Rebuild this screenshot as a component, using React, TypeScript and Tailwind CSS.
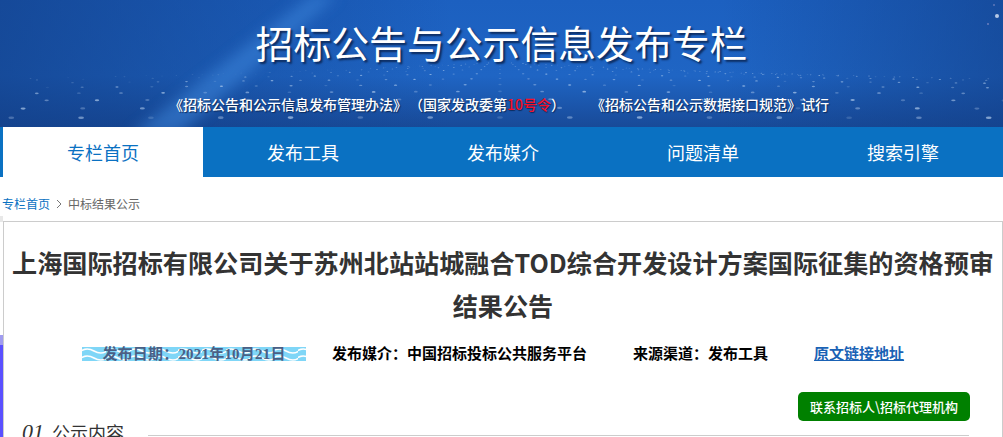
const cjk = "font-['Noto_Sans_CJK_SC','Liberation_Sans',sans-serif]";

const navItems = ['专栏首页', '发布工具', '发布媒介', '问题清单', '搜索引擎'];

// grid of dots fanning out from the horizon behind the title
function makeDots() {
  const dots: { x: number; y: number; r: number; o: number }[] = [];
  for (let i = -26; i <= 26; i++) {
    for (let j = 0; j < 12; j++) {
      const t = (j + 1) / 12;
      const depth = t * t;
      const x = 500 + i * (11 + depth * 70);
      const y = 62 + depth * 66 + Math.abs(i) * 0.55 * (1 - t);
      if (x < -5 || x > 1008 || y > 127) continue;
      dots.push({ x, y, r: 0.45 + depth * 1.5, o: 0.18 + ((i * 7 + j * 5 + 60) % 5) * 0.1 });
    }
  }
  return dots;
}

function BannerArt() {
  return (
    <svg className="absolute inset-0 w-full h-full" viewBox="0 0 1003 127" preserveAspectRatio="none" aria-hidden>
      <defs>
        <linearGradient id="sky" x1="0" y1="0" x2="0" y2="1">
          <stop offset="0" stopColor="#1c60c0" />
          <stop offset="0.6" stopColor="#1f65c4" />
          <stop offset="1" stopColor="#184a98" />
        </linearGradient>
        <linearGradient id="fadeL" x1="0" y1="0" x2="1" y2="0">
          <stop offset="0" stopColor="#123f88" stopOpacity="0.7" />
          <stop offset="0.3" stopColor="#123f88" stopOpacity="0.25" />
          <stop offset="0.45" stopColor="#123f88" stopOpacity="0" />
        </linearGradient>
        <linearGradient id="fadeR" x1="0" y1="0" x2="1" y2="0">
          <stop offset="0.72" stopColor="#123f88" stopOpacity="0" />
          <stop offset="1" stopColor="#123f88" stopOpacity="0.6" />
        </linearGradient>
        <filter id="soft"><feGaussianBlur stdDeviation="7" /></filter>
      </defs>
      <rect width="1003" height="127" fill="url(#sky)" />
      <rect width="1003" height="127" fill="url(#fadeL)" />
      <rect width="1003" height="127" fill="url(#fadeR)" />
      <path d="M312 -5 L338 -5 L178 135 L130 135 Z" fill="#3d86dc" opacity="0.55" filter="url(#soft)" />
      {makeDots().map((d, i) => (
        <ellipse key={i} cx={d.x} cy={d.y} rx={d.r * 1.7} ry={d.r * 0.75} fill="#cfe3fa" opacity={d.o} />
      ))}
      <circle cx="997" cy="16" r="2" fill="#dfe9f8" opacity="0.8" />
      <circle cx="988" cy="24" r="0.8" fill="#e6c8ea" opacity="0.7" />
      <circle cx="994" cy="5" r="0.8" fill="#e6c8ea" opacity="0.6" />
    </svg>
  );
}

function WaveFill() {
  return (
    <svg className="absolute inset-0 w-full h-full" aria-hidden>
      <defs>
        <pattern id="wave" width="24" height="14" patternUnits="userSpaceOnUse">
          <rect width="24" height="14" fill="#7fd6f7" />
          <path d="M-1 4 Q5 0 12 4 T25 4" fill="none" stroke="#fff" strokeWidth="1.7" />
          <path d="M-1 11 Q5 7 12 11 T25 11" fill="none" stroke="#fff" strokeWidth="1.7" />
        </pattern>
      </defs>
      <rect width="100%" height="100%" fill="url(#wave)" />
    </svg>
  );
}

export default function App() {
  return (
    <div className={`relative h-[437px] w-full overflow-hidden bg-white ${cjk}`}>
      <header className="relative h-[127px] overflow-hidden">
        <BannerArt />
        <div className="relative flex flex-col items-center">
          <h1 className="mt-[18px] text-[37.85px] leading-[48px] font-normal text-white [text-shadow:2px_2px_2px_#0c2a5c]">
            招标公告与公示信息发布专栏
          </h1>
          <p className="mt-[28px] flex pr-[5px] text-[14px] leading-[20px] font-medium text-white [text-shadow:1px_1px_1px_#0c2a5c]">
            <span>
              《招标公告和公示信息发布管理办法》
              <span className="ml-[9px]">（国家发改委第</span>
              <span className="text-[#f5102a]">10号令</span>）
            </span>
            <span className="ml-[26px]">《招标公告和公示数据接口规范》试行</span>
          </p>
        </div>
      </header>

      <nav className="flex h-[50px] bg-[#0a71c2] pl-[3px]">
        {navItems.map((item, i) => (
          <a
            key={item}
            className={`flex w-[200px] items-center justify-center text-[18px] ${
              i === 0 ? 'bg-white text-[#0a71c2]' : 'text-white'
            }`}
          >
            {item}
          </a>
        ))}
      </nav>

      <div className="flex h-[44px] items-center pt-[10px] pl-[2px] text-[12px]">
        <span className="text-[#0a71c2]">专栏首页</span>
        <svg className="mx-[6px] h-[10px] w-[6px]" viewBox="0 0 6 10" fill="none" stroke="#777" aria-hidden>
          <path d="M1 1l4 4-4 4" />
        </svg>
        <span className="text-[#666]">中标结果公示</span>
      </div>

      <main className="relative ml-[3px] border-t border-r border-l border-[#ccc]">
        <h2 className="mx-auto mt-[19px] w-[995px] text-center text-[25.13px] leading-[43px] font-bold text-[#333]">
          上海国际招标有限公司关于苏州北站站城融合TOD综合开发设计方案国际征集的资格预审结果公告
        </h2>

        <div className="mt-[13px] flex h-[28px] items-center pl-[78px] font-['Liberation_Serif','Noto_Sans_CJK_SC',serif] text-[15px] font-bold text-black">
          <span className="relative inline-block h-[14px] w-[224px] text-center tracking-[0.2px] text-[#4a5f85]">
            <WaveFill />
            <span className="relative block leading-[14px]">发布日期：2021年10月21日</span>
          </span>
          <span className="ml-[26px]">发布媒介：中国招标投标公共服务平台</span>
          <span className="ml-[46px]">来源渠道：发布工具</span>
          <a className="ml-[46px] text-[#1a62b5] underline">原文链接地址</a>
        </div>

        <div className="mt-[24px] flex justify-end pr-[32px]">
          <button className="h-[29px] w-[172px] rounded-[5px] bg-[#008000] text-[13px] font-medium text-white">
            联系招标人\招标代理机构
          </button>
        </div>

        <div className="-mt-[3px] flex items-end pr-[33px] pl-[18px]">
          <span className="font-['Liberation_Serif',serif] text-[22px] leading-[28px] text-[#333] italic">01</span>
          <span className="ml-[8px] text-[18px] leading-[28px] text-[#333]">公示内容</span>
          <div className="mb-[10px] ml-[24px] flex-1 border-t border-[#ccc]" />
        </div>
      </main>

      <div className="absolute top-[216px] left-0 h-[6px] w-[3px] bg-[#e8e8e8]" />
      <div className="absolute top-[335px] left-0 h-[102px] w-[3px] bg-[#5a50ff]">
        <div className="h-[10px] bg-[#a09cf0]" />
      </div>
    </div>
  );
}
